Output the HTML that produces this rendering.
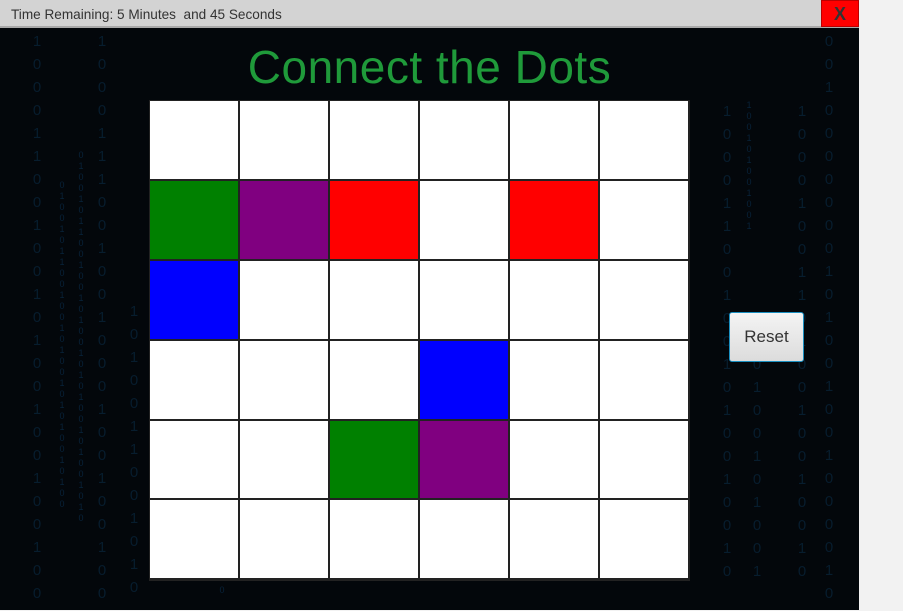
<!DOCTYPE html>
<html><head><meta charset="utf-8"><style>
*{margin:0;padding:0;box-sizing:border-box}
body{width:903px;height:611px;background:#f2f2f2;position:relative;overflow:hidden;font-family:"Liberation Sans",sans-serif}
#win{position:absolute;left:0;top:0;width:859px;height:610px;background:#03070b;overflow:hidden}
#bar{position:absolute;left:0;top:0;width:859px;height:28px;background:#d3d3d3;border-bottom:2px solid #a9a9a9;font-size:13.6px;color:#333;padding:7px 0 0 11px}
#x{position:absolute;left:821px;top:0;width:38px;height:27px;background:#ff0000;border:1px solid #b00;color:#333;font-weight:bold;font-size:18px;text-align:center;line-height:27px}
h1{position:absolute;left:0;width:859px;top:40px;text-align:center;font-weight:normal;font-size:46px;color:#1f9a3a;font-family:"Liberation Sans",sans-serif;letter-spacing:0.5px}
#grid{position:absolute;left:149px;top:100px;width:541px;height:481px;background:#222;display:grid;grid-template-columns:88px 88px 88px 88px 88px 88px;grid-template-rows:78px 78px 78px 78px 77px 78px;gap:2px;padding:1px 2px 2px 1px}
#grid div{background:#fff}
.g{background:#008000!important}.p{background:#800080!important}.r{background:#ff0000!important}.b{background:#0000ff!important}
#reset{position:absolute;left:729px;top:312px;width:75px;height:50px;border:1px solid #1a8fc0;border-radius:3px;background:linear-gradient(#f4f4f4,#dcdcdc);font-size:17px;color:#333;text-align:center;line-height:48px}
.c{position:absolute;color:#071d2e;font-size:15px;line-height:23px;text-align:center;width:14px;font-family:"Liberation Sans",sans-serif}
.s{font-size:9px;line-height:11px;color:#08233a}
</style></head><body>
<div id="win">
<div class="c" style="left:30px;top:30px">1<br>0<br>0<br>0<br>1<br>1<br>0<br>0<br>1<br>0<br>0<br>1<br>0<br>1<br>0<br>0<br>1<br>0<br>0<br>1<br>0<br>0<br>1<br>0<br>0</div>
<div class="c" style="left:95px;top:30px">1<br>0<br>0<br>0<br>1<br>1<br>1<br>0<br>0<br>1<br>0<br>0<br>1<br>0<br>0<br>0<br>1<br>0<br>0<br>1<br>0<br>0<br>1<br>0<br>0</div>
<div class="c s" style="left:55px;top:180px">0<br>1<br>0<br>0<br>1<br>0<br>1<br>1<br>0<br>0<br>1<br>0<br>0<br>1<br>0<br>1<br>0<br>0<br>1<br>0<br>1<br>0<br>1<br>0<br>0<br>1<br>0<br>1<br>0<br>0</div>
<div class="c s" style="left:74px;top:150px">0<br>1<br>0<br>0<br>1<br>0<br>1<br>1<br>0<br>0<br>1<br>0<br>0<br>1<br>0<br>1<br>0<br>0<br>1<br>0<br>1<br>0<br>1<br>0<br>0<br>1<br>0<br>1<br>0<br>0<br>1<br>0<br>1<br>0</div>
<div class="c" style="left:127px;top:300px">1<br>0<br>1<br>0<br>0<br>1<br>1<br>0<br>0<br>1<br>0<br>1<br>0</div>
<div class="c" style="left:720px;top:100px">1<br>0<br>0<br>0<br>1<br>1<br>0<br>0<br>1<br>0<br>0<br>1<br>0<br>1<br>0<br>0<br>1<br>0<br>0<br>1<br>0</div>
<div class="c" style="left:750px;top:330px">1<br>0<br>1<br>0<br>0<br>1<br>0<br>1<br>0<br>0<br>1</div>
<div class="c" style="left:795px;top:100px">1<br>0<br>0<br>0<br>1<br>0<br>0<br>1<br>1<br>0<br>1<br>0<br>0<br>1<br>0<br>0<br>1<br>0<br>0<br>1<br>0</div>
<div class="c" style="left:822px;top:30px">0<br>0<br>1<br>0<br>0<br>0<br>0<br>0<br>0<br>0<br>1<br>0<br>1<br>0<br>0<br>1<br>0<br>0<br>1<br>0<br>0<br>0<br>0<br>1<br>0</div>
<div class="c s" style="left:742px;top:100px">1<br>0<br>0<br>1<br>0<br>1<br>0<br>0<br>1<br>0<br>0<br>1</div>
<div class="c s" style="left:215px;top:585px">0</div>
<div id="bar">Time Remaining: 5 Minutes &nbsp;and 45 Seconds</div>
<div id="x">X</div>
<h1>Connect the Dots</h1>
<div id="grid">
<div></div><div></div><div></div><div></div><div></div><div></div>
<div class="g"></div><div class="p"></div><div class="r"></div><div></div><div class="r"></div><div></div>
<div class="b"></div><div></div><div></div><div></div><div></div><div></div>
<div></div><div></div><div></div><div class="b"></div><div></div><div></div>
<div></div><div></div><div class="g"></div><div class="p"></div><div></div><div></div>
<div></div><div></div><div></div><div></div><div></div><div></div>
</div>
<div id="reset">Reset</div>
</div>
</body></html>
